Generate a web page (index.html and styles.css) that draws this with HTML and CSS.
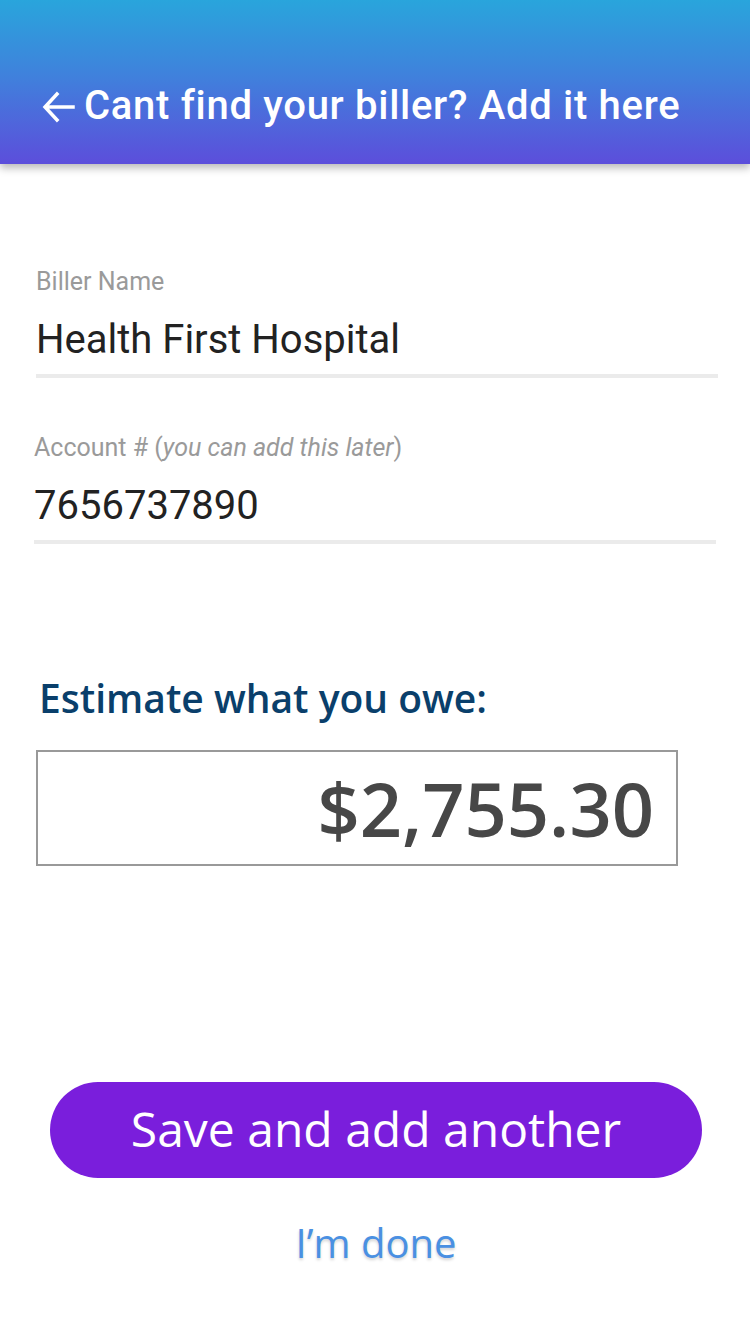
FILE: index.html
```html
<!DOCTYPE html>
<html>
<head>
<meta charset="utf-8">
<link rel="stylesheet" href="styles.css">
</head>
<body>
<div class="screen">
  <header class="appbar">
    <svg class="back" viewBox="0 0 36 36" width="36" height="36"><path d="M33 18H6M17 5L5 18l12 13" fill="none" stroke="#fff" stroke-width="3.5" stroke-linecap="square"/></svg>
    <h1 class="title">Cant find your biller? Add it here</h1>
  </header>
  <main class="form">
    <div class="field field-biller">
      <div class="label">Biller Name</div>
      <div class="value">Health First Hospital</div>
    </div>
    <div class="field field-account">
      <div class="label">Account # (<em>you can add this later</em>)</div>
      <div class="value">7656737890</div>
    </div>
    <h2 class="estimate">Estimate what you owe:</h2>
    <div class="amount-box"><span class="amount">$2,755.30</span></div>
  </main>
  <div class="actions">
    <button class="primary">Save and add another</button>
    <a class="done">I’m done</a>
  </div>
</div>
</body>
</html>
```
FILE: styles.css
```css
* { box-sizing: border-box; }
html, body { margin: 0; padding: 0; background: #fff; }
.screen { width: 750px; height: 1340px; display: flex; flex-direction: column; font-family: Roboto, "Noto Sans", sans-serif; }
.appbar {
  height: 164px;
  background: linear-gradient(to bottom, #29a5dc 0%, #3f82dc 45%, #5c4edb 100%);
  box-shadow: 0 4px 8px rgba(0,0,0,0.28);
  display: flex; align-items: flex-end;
  padding: 0 0 35px 40px;
  gap: 8px;
  position: relative; z-index: 1;
}
.back { flex: none; margin-bottom: 4px; }
.title { margin: 0; color: #fff; font-weight: 500; font-size: 40px; line-height: 46px; letter-spacing: 0.7px; }
.form { padding: 0 32px 0 36px; }
.field-biller { padding-top: 103px; }
.field-account { padding-top: 55px; margin-left: -2px; margin-right: 2px; }
.label { color: #9a9a9a; font-size: 25px; line-height: 30px; }
.label em { font-style: italic; }
.value { color: #222; font-size: 40px; line-height: 48px; margin-top: 19px; padding-bottom: 10px; border-bottom: 4px solid #ebebeb; }
.estimate { margin: 131px 0 0 3px; font-family: "Open Sans", sans-serif; font-weight: 600; font-size: 39px; line-height: 46px; color: #0a3f6b; }
.amount-box { margin-top: 29px; width: 642px; height: 116px; border: 2px solid #999; display: flex; align-items: center; justify-content: flex-end; padding-right: 22px; }
.amount { font-family: "Open Sans", sans-serif; font-weight: 600; font-size: 74px; color: #474747; }
.actions { margin-top: auto; padding: 0 48px 70px 50px; display: flex; flex-direction: column; align-items: center; }
.primary { width: 652px; height: 96px; border: none; border-radius: 48px; background: #7a1edc; color: #fff; font-family: "Open Sans", sans-serif; font-size: 48px; font-weight: 500; padding: 0 0 3px; }
.done { margin-top: 37px; font-family: "Open Sans", sans-serif; font-size: 40px; color: #4a90e2; text-shadow: 0 2px 3px rgba(0,0,0,0.18); }
```
